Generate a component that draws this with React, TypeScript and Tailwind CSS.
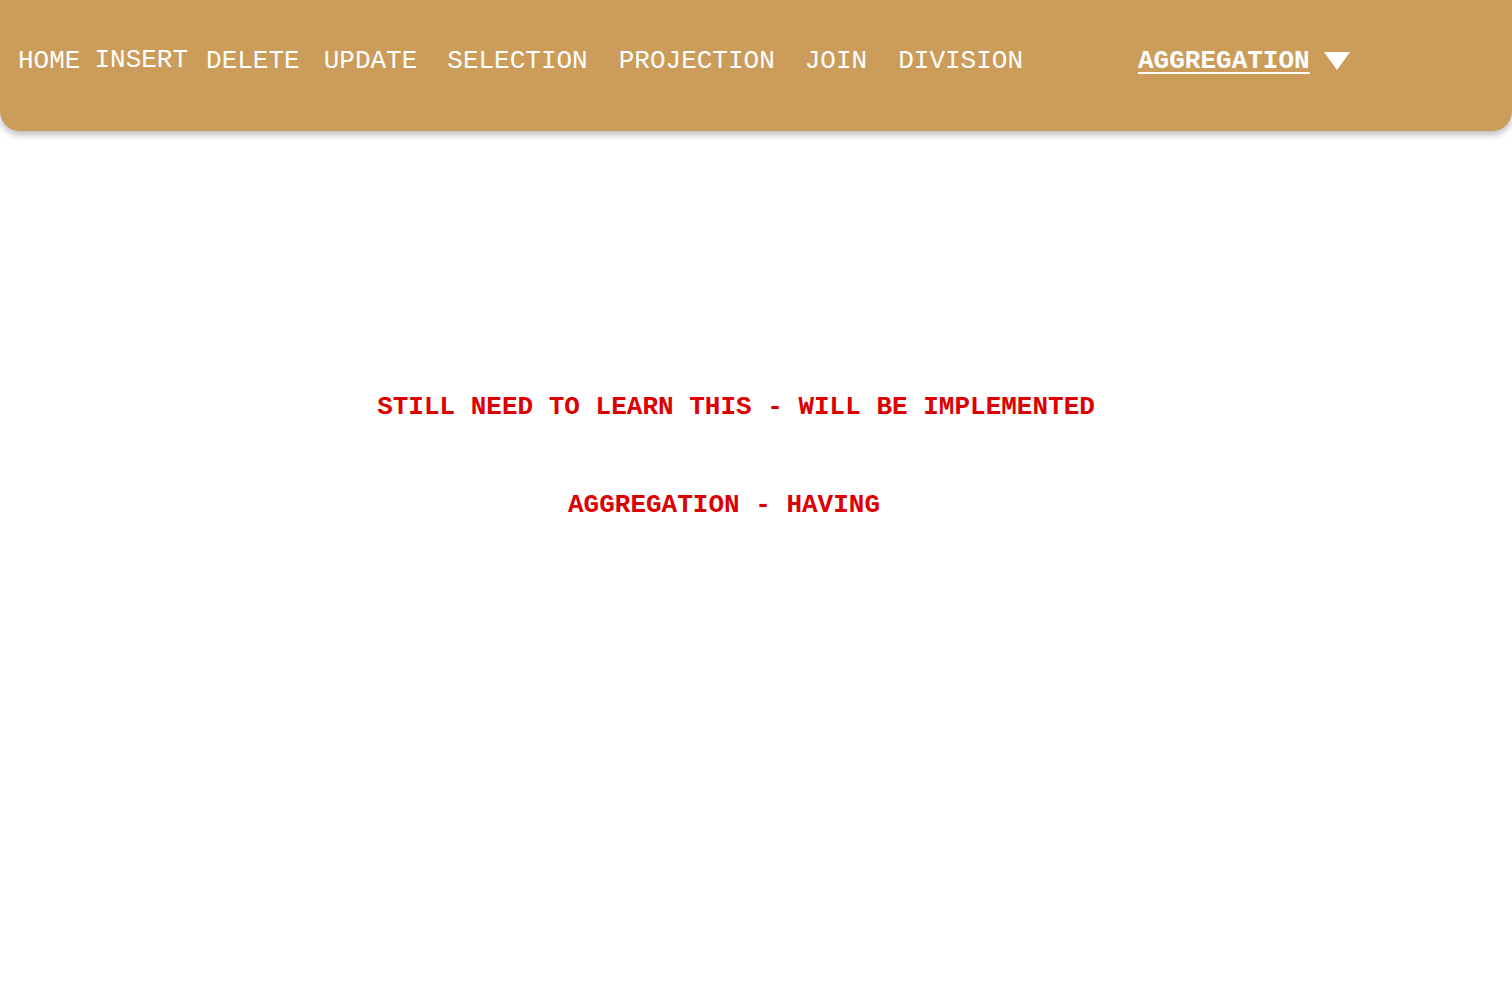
import { useState } from 'react';

const navItems = [
  { label: 'HOME', className: 'ml-[18px]' },
  { label: 'INSERT', className: 'ml-[14px] -translate-y-px' },
  { label: 'DELETE', className: 'ml-[18px]' },
  { label: 'UPDATE', className: 'ml-[24px]' },
  { label: 'SELECTION', className: 'ml-[30px]' },
  { label: 'PROJECTION', className: 'ml-[31px]' },
  { label: 'JOIN', className: 'ml-[30px]' },
  { label: 'DIVISION', className: 'ml-[31px]' },
];

export default function App() {
  const [active] = useState('AGGREGATION');

  return (
    <div className="min-h-screen bg-white font-['Liberation_Mono','Courier_New',monospace]">
      <nav className="h-[131px] bg-[#cc9c5a] rounded-b-[20px] shadow-[0_4px_6px_rgba(0,0,0,0.25)] flex items-start pt-[46px] text-white text-[26px] leading-[30px]">
        {navItems.map((item) => (
          <a key={item.label} href="#" className={item.className}>
            {item.label}
          </a>
        ))}
        <div className="ml-[115px] flex items-center">
          <a href="#" className="font-bold underline underline-offset-[4px] decoration-[1.5px]">
            {active}
          </a>
          <svg width="26" height="18" viewBox="0 0 26 18" className="ml-[14px]">
            <polygon points="0,0 26,0 13,18" fill="#ffffff" />
          </svg>
        </div>
      </nav>

      <main className="flex flex-col items-center text-[#dc0000] font-bold">
        <p className="mt-[261px] pr-[40px] text-[26px] leading-[30px]">
          STILL NEED TO LEARN THIS - WILL BE IMPLEMENTED
        </p>
        <p className="mt-[68px] pr-[64px] text-[26px] leading-[30px]">
          AGGREGATION - HAVING
        </p>
      </main>
    </div>
  );
}
